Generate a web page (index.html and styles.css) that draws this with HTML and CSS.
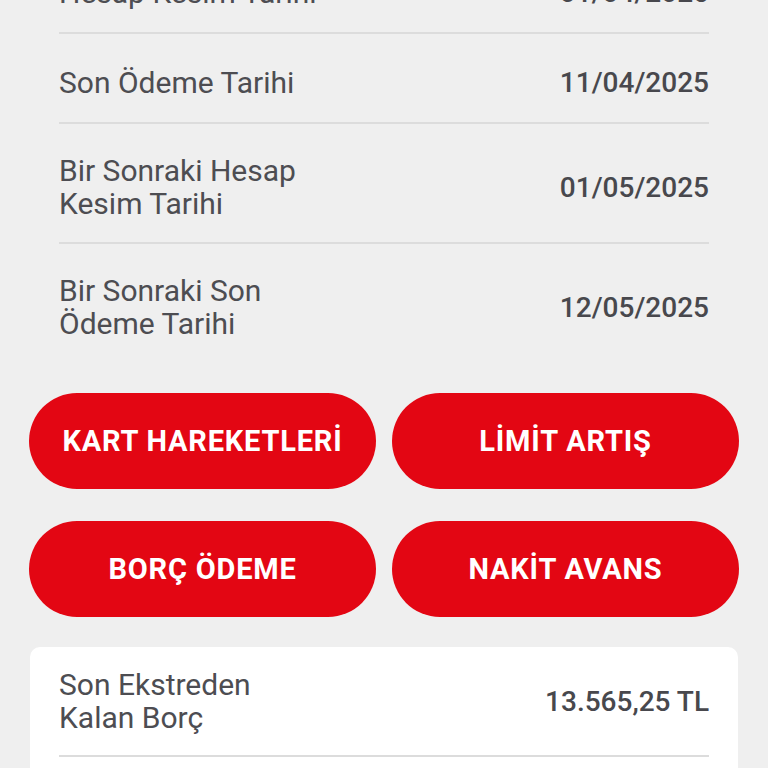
FILE: index.html
```html
<!DOCTYPE html>
<html lang="tr">
<head>
    <meta charset="UTF-8">
    <meta name="viewport" content="width=device-width, initial-scale=1.0">
    <title>Kart Detayı</title>
    <link rel="stylesheet" href="styles.css">
</head>
<body>
<div class="list">
    <div class="row">
        <span class="label">Hesap Kesim Tarihi</span>
        <span class="value">01/04/2025</span>
    </div>
    <div class="row">
        <span class="label">Son Ödeme Tarihi</span>
        <span class="value">11/04/2025</span>
    </div>
    <div class="row">
        <span class="label">Bir Sonraki Hesap<br>Kesim Tarihi</span>
        <span class="value">01/05/2025</span>
    </div>
    <div class="row last">
        <span class="label">Bir Sonraki Son<br>Ödeme Tarihi</span>
        <span class="value">12/05/2025</span>
    </div>
</div>

<div class="actions">
    <button class="btn">KART HAREKETLERİ</button>
    <button class="btn">LİMİT ARTIŞ</button>
    <button class="btn">BORÇ ÖDEME</button>
    <button class="btn">NAKİT AVANS</button>
</div>

<div class="card">
    <div class="row card-row">
        <span class="label">Son Ekstreden<br>Kalan Borç</span>
        <span class="value">13.565,25 TL</span>
    </div>
</div>
</body>
</html>
```

FILE: styles.css
```css
body {
    margin: 0;
    background: #efefef;
    font-family: Roboto, "Liberation Sans", sans-serif;
    color: #4d4d52;
    overflow: hidden;
}
.list {
    margin: -56px 59px 0 59px;
}
.row {
    display: flex;
    justify-content: space-between;
    align-items: center;
    min-height: 36px;
    padding: 30px 0 22px 0;
    border-bottom: 2px solid #dcdcdc;
}
.row.last {
    border-bottom: none;
}
.label {
    font-size: 30px;
    line-height: 33px;
    font-weight: 400;
}
.value {
    font-size: 28px;
    line-height: 33px;
    font-weight: 500;
    color: #48484d;
}
.actions {
    display: grid;
    grid-template-columns: 1fr 1fr;
    gap: 32px 16px;
    margin: 31px 29px 0 29px;
}
.btn {
    height: 96px;
    border: none;
    border-radius: 48px;
    background-color: #e30613;
    color: white;
    font-family: Roboto, "Liberation Sans", sans-serif;
    font-size: 29px;
    font-weight: 700;
    letter-spacing: 0.8px;
    cursor: pointer;
}
.card {
    margin: 30px 30px 0 30px;
    padding: 0 29px 30px 29px;
    background: #fff;
    border-radius: 10px;
}
.card-row {
    padding: 21px 0 21px 0;
}
```
